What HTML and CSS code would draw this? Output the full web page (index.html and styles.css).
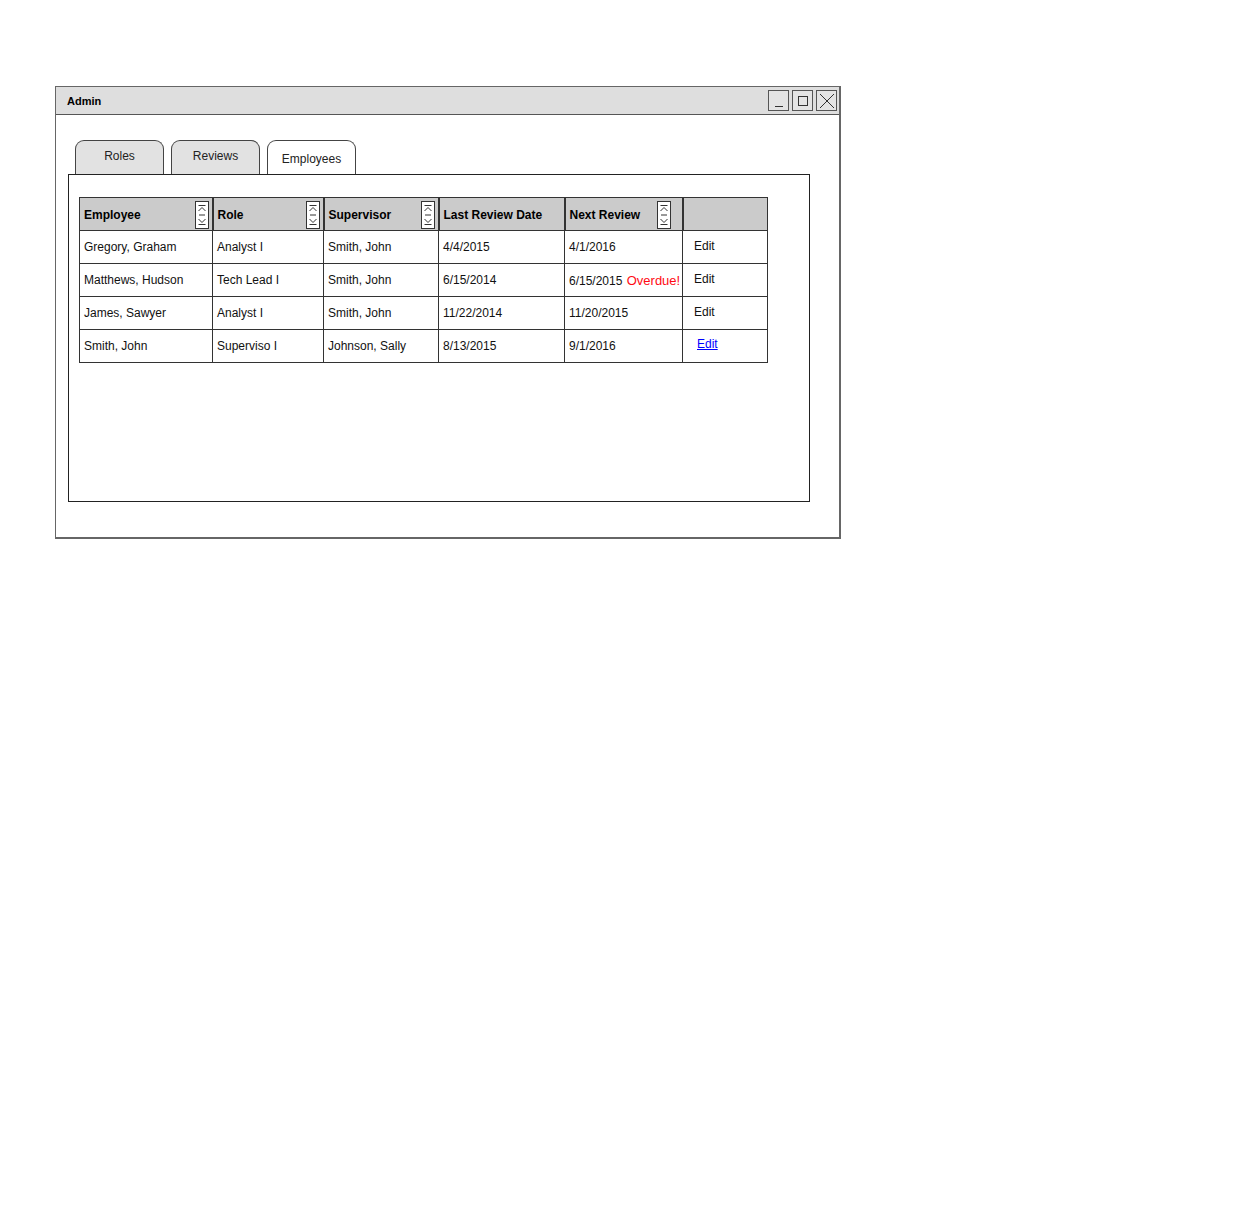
FILE: index.html
```html
<!DOCTYPE html>
<html>
<head>
<meta charset="utf-8">
<title>Admin</title>
<link rel="stylesheet" href="styles.css">
</head>
<body>
<div class="window">
  <div class="titlebar">
    <span class="title">Admin</span>
    <div class="winbtns">
      <span class="winbtn"><svg width="18" height="18" viewBox="0 0 18 18"><line x1="5" y1="14.5" x2="13" y2="14.5" stroke="#333" stroke-width="1"/></svg></span>
      <span class="winbtn"><svg width="18" height="18" viewBox="0 0 18 18"><rect x="4.5" y="4.5" width="9" height="9" fill="none" stroke="#333" stroke-width="1"/></svg></span>
      <span class="winbtn"><svg width="18" height="18" viewBox="0 0 18 18"><path d="M2 2 L16 16 M16 2 L2 16" stroke="#333" stroke-width="1"/></svg></span>
    </div>
  </div>
  <div class="content">
    <div class="tabs">
      <div class="tab">Roles</div>
      <div class="tab">Reviews</div>
      <div class="tab active">Employees</div>
    </div>
    <div class="panel">
      <table class="grid">
        <colgroup>
          <col class="c1"><col class="c2"><col class="c3"><col class="c4"><col class="c5"><col class="c6">
        </colgroup>
        <thead>
          <tr>
            <th><div class="thin"><span>Employee</span><svg class="sort" width="14" height="28" viewBox="0 0 14 28"><rect x="0.5" y="0.5" width="13" height="27" fill="#fff" stroke="#333"/><path d="M3.5 4.5 H10.5 M3.5 10 L7 6.5 L10.5 10 M4 14 H10 M3.5 18 L7 21.5 L10.5 18 M3.5 23.5 H10.5" fill="none" stroke="#333"/></svg></div></th>
            <th><div class="thin"><span>Role</span><svg class="sort" width="14" height="28" viewBox="0 0 14 28"><rect x="0.5" y="0.5" width="13" height="27" fill="#fff" stroke="#333"/><path d="M3.5 4.5 H10.5 M3.5 10 L7 6.5 L10.5 10 M4 14 H10 M3.5 18 L7 21.5 L10.5 18 M3.5 23.5 H10.5" fill="none" stroke="#333"/></svg></div></th>
            <th><div class="thin"><span>Supervisor</span><svg class="sort" width="14" height="28" viewBox="0 0 14 28"><rect x="0.5" y="0.5" width="13" height="27" fill="#fff" stroke="#333"/><path d="M3.5 4.5 H10.5 M3.5 10 L7 6.5 L10.5 10 M4 14 H10 M3.5 18 L7 21.5 L10.5 18 M3.5 23.5 H10.5" fill="none" stroke="#333"/></svg></div></th>
            <th><div class="thin"><span>Last Review Date</span></div></th>
            <th><div class="thin"><span>Next Review</span><svg class="sort nr" width="14" height="28" viewBox="0 0 14 28"><rect x="0.5" y="0.5" width="13" height="27" fill="#fff" stroke="#333"/><path d="M3.5 4.5 H10.5 M3.5 10 L7 6.5 L10.5 10 M4 14 H10 M3.5 18 L7 21.5 L10.5 18 M3.5 23.5 H10.5" fill="none" stroke="#333"/></svg></div></th>
            <th></th>
          </tr>
        </thead>
        <tbody>
          <tr><td>Gregory, Graham</td><td>Analyst I</td><td>Smith, John</td><td>4/4/2015</td><td>4/1/2016</td><td class="edit">Edit</td></tr>
          <tr><td>Matthews, Hudson</td><td>Tech Lead I</td><td>Smith, John</td><td>6/15/2014</td><td class="clip">6/15/2015 <span class="overdue">Overdue!</span></td><td class="edit">Edit</td></tr>
          <tr><td>James, Sawyer</td><td>Analyst I</td><td>Smith, John</td><td>11/22/2014</td><td>11/20/2015</td><td class="edit">Edit</td></tr>
          <tr><td>Smith, John</td><td>Superviso I</td><td>Johnson, Sally</td><td>8/13/2015</td><td>9/1/2016</td><td class="edit link"><a href="#">Edit</a></td></tr>
        </tbody>
      </table>
    </div>
  </div>
</div>
</body>
</html>
```

FILE: styles.css
```css
* { box-sizing: border-box; }
html, body { margin: 0; padding: 0; background: #fff; }
body {
  padding: 86px 0 0 55px;
  font-family: "Liberation Sans", Arial, sans-serif;
  font-size: 12px;
  color: #111;
}
.window {
  width: 786px;
  height: 453px;
  border: 1px solid #666;
  border-right-width: 2px;
  border-bottom-width: 2px;
  background: #fff;
}
.titlebar {
  height: 28px;
  background: #dedede;
  border-bottom: 1px solid #555;
  display: flex;
  align-items: center;
  justify-content: space-between;
  padding: 0 2px 0 11px;
}
.title {
  font-weight: bold;
  font-size: 11px;
  color: #000;
}
.winbtns { display: flex; gap: 3px; }
.winbtn {
  width: 21px;
  height: 21px;
  border: 1px solid #555;
  background: #e4e4e4;
  display: flex;
  align-items: center;
  justify-content: center;
}
.content {
  padding: 25px 0 0 12px;
}
.tabs {
  display: flex;
  gap: 7px;
  padding-left: 7px;
  height: 34px;
  align-items: flex-end;
}
.tab {
  width: 89px;
  height: 34px;
  border: 1px solid #444;
  border-bottom: none;
  border-radius: 9px 9px 0 0;
  background: #e2e2e2;
  display: flex;
  align-items: center;
  justify-content: center;
  padding-bottom: 3px;
  font-size: 12px;
  color: #222;
}
.tab.active {
  background: #fff;
  padding-bottom: 0;
  padding-top: 2px;
}
.panel {
  width: 742px;
  height: 328px;
  border: 1px solid #222;
  padding: 22px 0 0 10px;
}
.grid {
  border-collapse: collapse;
  table-layout: fixed;
  width: 688px;
}
.c1 { width: 133px; }
.c2 { width: 111px; }
.c3 { width: 115px; }
.c4 { width: 126px; }
.c5 { width: 118px; }
.c6 { width: 85px; }
.grid th, .grid td {
  border: 1px solid #333;
  height: 33px;
  padding: 0 0 0 4px;
  text-align: left;
  white-space: nowrap;
  overflow: hidden;
}
.grid th {
  background: #cbcbcb;
  font-weight: bold;
  font-size: 12px;
  color: #000;
  padding-right: 3px;
  padding-top: 1px;
}
.grid th + th { border-left: 2px solid #333; }
.thin {
  display: flex;
  align-items: center;
  justify-content: space-between;
}
.sort { display: block; flex: none; }
.sort.nr { margin-right: 8px; }
.grid td { color: #111; }
.grid td.clip { padding-left: 4px; padding-right: 0; }
.overdue {
  color: #ff0a14;
  font-size: 13px;
  margin-left: 1px;
}
.grid td.edit { padding-left: 11px; padding-bottom: 3px; }
.grid td.link { padding-left: 14px; padding-bottom: 5px; }
.grid td.link a { color: #0000ff; text-decoration: underline; }
```
